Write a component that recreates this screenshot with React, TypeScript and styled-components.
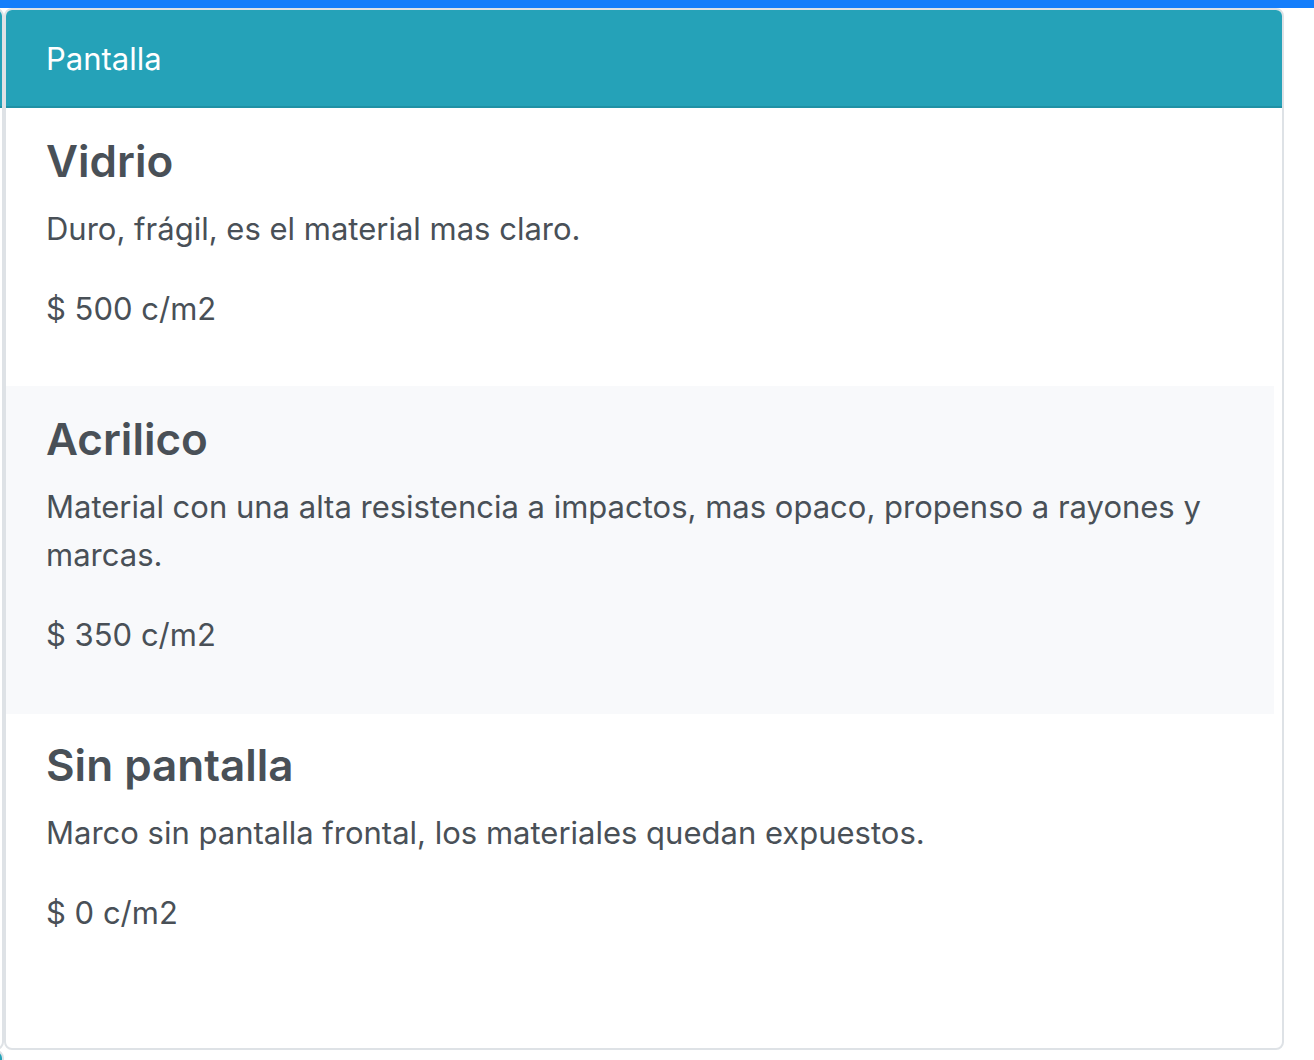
import React from "react";
import styled, { createGlobalStyle } from "styled-components";

const GlobalStyle = createGlobalStyle`
  *, *::before, *::after { box-sizing: border-box; }
  body {
    margin: 0;
    background: #fff;
    color: #495057;
    font: 400 31px/48px Inter, "Liberation Sans", sans-serif;
  }
`;

const Page = styled.div`
  display: flex;
  flex-direction: column;
  min-height: 100vh;
  border-top: 8px solid #147efb;
`;

const Columns = styled.main`
  display: grid;
  grid-template-columns: 4px minmax(0, 1fr);
  padding-right: 30px;
`;

/* Narrow strip in which only the right edge of the neighbouring card shows. */
const EdgeColumn = styled.div`
  display: flex;
  justify-content: flex-end;
  width: 4px;
  overflow: hidden;
`;

/* Only the top of the following row of cards peeks in. */
const NextRow = styled.div`
  display: flex;
  align-items: flex-start;
  height: 10px;
  overflow: hidden;
`;

const Card = styled.section`
  border: 2px solid #dee2e6;
  border-radius: 8px;
  background: #fff;
  overflow: hidden;
`;

const EdgeCard = styled(Card)`
  flex: 0 0 40px;
`;

const CardHeader = styled.header`
  min-height: 98px;
  padding: 25px 40px 23px;
  background: #25a2b8;
  border-bottom: 2px solid #2091a5;
  color: #fff;
`;

const OptionList = styled.ul`
  list-style: none;
  margin: 0;
  padding: 0 8px 56px 0;
`;

const Option = styled.li<{ $active?: boolean }>`
  position: relative;
  z-index: ${({ $active }) => ($active ? 1 : 0)};
  padding: 25px 40px 23px;
  background: ${({ $active }) => ($active ? "#f8f9fb" : "#fff")};

  & + & {
    margin-top: -2px;
  }
`;

const Name = styled.h2`
  margin: 0 0 16px;
  font-size: 44px;
  line-height: 56px;
  font-weight: 600;
`;

const Text = styled.p`
  margin: 0 0 32px;
`;

const options = [
  { name: "Vidrio", text: "Duro, frágil, es el material mas claro.", price: 500 },
  {
    name: "Acrilico",
    text: "Material con una alta resistencia a impactos, mas opaco, propenso a rayones y marcas.",
    price: 350,
    active: true,
  },
  { name: "Sin pantalla", text: "Marco sin pantalla frontal, los materiales quedan expuestos.", price: 0 },
];

export default function App() {
  return (
    <Page>
      <GlobalStyle />
      <Columns>
        <EdgeColumn>
          <EdgeCard>
            <CardHeader />
          </EdgeCard>
        </EdgeColumn>
        <Card>
          <CardHeader>Pantalla</CardHeader>
          <OptionList>
            {options.map((o) => (
              <Option key={o.name} $active={o.active}>
                <Name>{o.name}</Name>
                <Text>{o.text}</Text>
                <Text>$ {o.price} c/m2</Text>
              </Option>
            ))}
          </OptionList>
        </Card>
      </Columns>
      <NextRow>
        <EdgeColumn>
          <EdgeCard>
            <CardHeader />
          </EdgeCard>
        </EdgeColumn>
      </NextRow>
    </Page>
  );
}
